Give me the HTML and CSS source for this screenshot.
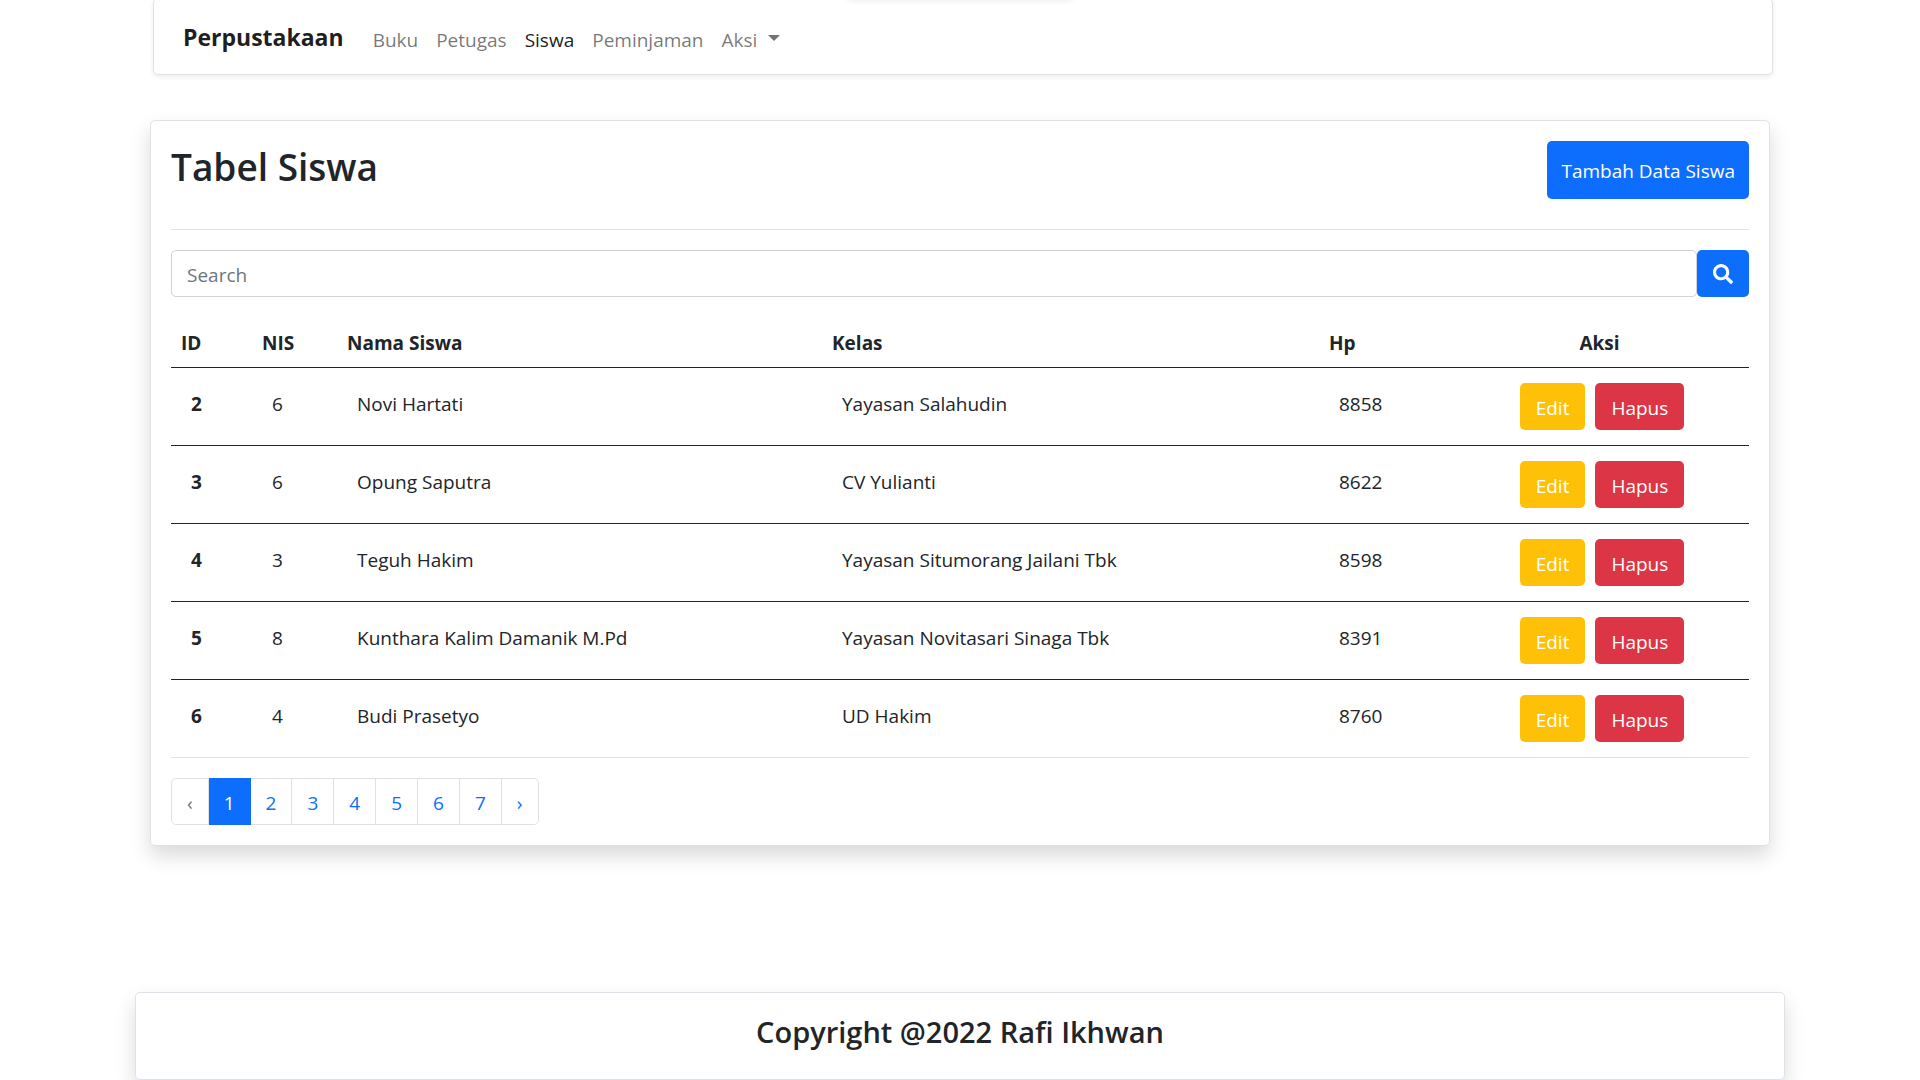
FILE: index.html
```html
<!DOCTYPE html>
<html lang="id">
<head>
<meta charset="utf-8">
<meta name="viewport" content="width=device-width, initial-scale=1">
<title>Perpustakaan</title>
<link rel="stylesheet" href="styles.css">
</head>
<body>
<header class="page-header">
  <nav class="navbar">
    <a class="brand" href="#">Perpustakaan</a>
    <ul class="nav-list">
      <li><a class="nav-link" href="#">Buku</a></li>
      <li><a class="nav-link" href="#">Petugas</a></li>
      <li><a class="nav-link active" href="#" aria-current="page">Siswa</a></li>
      <li><a class="nav-link" href="#">Peminjaman</a></li>
      <li><button class="nav-link dropdown-toggle" type="button">Aksi</button></li>
    </ul>
  </nav>
</header>

<main class="card">
  <div class="card-head">
    <h1 class="title">Tabel Siswa</h1>
    <button class="btn btn-primary btn-add" type="button">Tambah Data Siswa</button>
  </div>
  <form class="search">
    <input class="search-input" type="search" placeholder="Search" aria-label="Search">
    <button class="btn btn-primary btn-search" type="submit" aria-label="Cari">
      <svg class="search-icon" viewBox="0 0 512 512" aria-hidden="true"><path fill="currentColor" d="M505 442.700L405.300 343c-4.500-4.500-10.600-7-17-7H372c27.600-35.300 44-79.700 44-128C416 93.100 322.900 0 208 0S0 93.100 0 208s93.100 208 208 208c48.300 0 92.700-16.400 128-44v16.300c0 6.400 2.500 12.500 7 17l99.700 99.700c9.400 9.400 24.600 9.400 33.900 0l28.300-28.300c9.400-9.400 9.400-24.600.1-34zM208 336c-70.700 0-128-57.200-128-128 0-70.700 57.200-128 128-128 70.700 0 128 57.200 128 128 0 70.700-57.200 128-128 128z"/></svg>
    </button>
  </form>
  <table class="table">
    <colgroup>
      <col class="col-id"><col class="col-nis"><col><col class="col-kelas"><col class="col-hp"><col class="col-aksi">
    </colgroup>
    <thead>
      <tr><th scope="col">ID</th><th scope="col">NIS</th><th scope="col">Nama Siswa</th><th scope="col">Kelas</th><th scope="col">Hp</th><th scope="col" class="center">Aksi</th></tr>
    </thead>
    <tbody>
      <tr><th scope="row">2</th><td>6</td><td>Novi Hartati</td><td>Yayasan Salahudin</td><td>8858</td><td class="actions"><button class="btn btn-warning" type="button">Edit</button><button class="btn btn-danger" type="button">Hapus</button></td></tr>
      <tr><th scope="row">3</th><td>6</td><td>Opung Saputra</td><td>CV Yulianti</td><td>8622</td><td class="actions"><button class="btn btn-warning" type="button">Edit</button><button class="btn btn-danger" type="button">Hapus</button></td></tr>
      <tr><th scope="row">4</th><td>3</td><td>Teguh Hakim</td><td>Yayasan Situmorang Jailani Tbk</td><td>8598</td><td class="actions"><button class="btn btn-warning" type="button">Edit</button><button class="btn btn-danger" type="button">Hapus</button></td></tr>
      <tr><th scope="row">5</th><td>8</td><td>Kunthara Kalim Damanik M.Pd</td><td>Yayasan Novitasari Sinaga Tbk</td><td>8391</td><td class="actions"><button class="btn btn-warning" type="button">Edit</button><button class="btn btn-danger" type="button">Hapus</button></td></tr>
      <tr><th scope="row">6</th><td>4</td><td>Budi Prasetyo</td><td>UD Hakim</td><td>8760</td><td class="actions"><button class="btn btn-warning" type="button">Edit</button><button class="btn btn-danger" type="button">Hapus</button></td></tr>
    </tbody>
  </table>
  <nav aria-label="Halaman">
    <ul class="pagination">
      <li><span class="page disabled">‹</span></li>
      <li><span class="page current" aria-current="page">1</span></li>
      <li><a class="page" href="#">2</a></li>
      <li><a class="page" href="#">3</a></li>
      <li><a class="page" href="#">4</a></li>
      <li><a class="page" href="#">5</a></li>
      <li><a class="page" href="#">6</a></li>
      <li><a class="page" href="#">7</a></li>
      <li><a class="page" href="#" rel="next">›</a></li>
    </ul>
  </nav>
</main>

<footer class="footer">
  <h2 class="copyright">Copyright @2022 Rafi Ikhwan</h2>
</footer>
</body>
</html>
```
FILE: styles.css
```css
* { box-sizing: border-box; }

body {
  margin: 0;
  min-height: 100vh;
  display: flex;
  flex-direction: column;
  align-items: center;
  background: #fff;
  color: #212529;
  font: 400 19px/30px "Open Sans", "Noto Sans", sans-serif;
}

/* Header */
.page-header {
  position: relative;
  width: 100%;
  max-width: 1650px;
  padding: 0 12px 0 18px;
}
.page-header::before {
  content: "";
  position: absolute;
  top: -40px;
  left: 50%;
  width: 224px;
  height: 36px;
  margin-left: -112px;
  border-radius: 4px;
  box-shadow: 0 2px 8px rgba(0, 0, 0, .16);
}
.navbar {
  display: flex;
  align-items: center;
  gap: 20px;
  height: 77px;
  margin-top: -2px;
  padding: 0 29px;
  border: 1px solid #dee2e6;
  border-radius: 5px;
  box-shadow: 0 2px 5px rgba(0, 0, 0, .075);
}
.brand {
  color: rgba(0, 0, 0, .9);
  font-size: 23px;
  font-weight: 700;
  text-decoration: none;
}
.nav-list {
  display: flex;
  margin: 0;
  padding: 6px 0 0;
  list-style: none;
}
.nav-link {
  display: block;
  padding: 0 9px;
  border: 0;
  background: none;
  color: rgba(0, 0, 0, .55);
  font: inherit;
  text-decoration: none;
}
.nav-link.active { color: rgba(0, 0, 0, .9); }
.dropdown-toggle::after {
  content: "";
  display: inline-block;
  margin-left: 11px;
  vertical-align: 6px;
  border: 6px solid transparent;
  border-top-color: currentColor;
  border-bottom: 0;
}

/* Card */
.card {
  width: calc(100% - 30px);
  max-width: 1620px;
  margin-top: 45px;
  padding: 20px;
  border: 1px solid #dee2e6;
  border-radius: 5px;
  box-shadow: 0 10px 20px rgba(0, 0, 0, .15);
}
.card-head {
  display: flex;
  justify-content: space-between;
  padding-bottom: 30px;
  border-bottom: 1px solid #dee2e6;
}
.title {
  margin: 0;
  font-size: 37px;
  font-weight: 600;
  line-height: 52px;
}

.btn {
  height: 47px;
  padding: 2px 16px 0;
  border: 0;
  border-radius: 5px;
  color: #fff;
  font: inherit;
}
.btn-primary { background: #0d6efd; }
.btn-warning { background: #ffc107; }
.btn-danger { background: #dc3545; }
.btn-add { height: 58px; padding: 2px 14px 0; }

.search {
  display: flex;
  margin: 20px 0;
}
.search-input {
  flex: 1;
  height: 47px;
  padding: 2px 15px 0;
  border: 1px solid #ced4da;
  border-radius: 5px;
  background: #fff;
  color: #212529;
  font: inherit;
  appearance: none;
}
.search-input::placeholder { color: #6c757d; opacity: 1; }
.btn-search { width: 52px; padding: 0 16px; }
.search-icon { display: block; width: 20px; height: 20px; }

/* Table */
.table {
  width: 100%;
  border-collapse: collapse;
  table-layout: fixed;
}
.col-id { width: 81px; }
.col-nis { width: 85px; }
.col-kelas { width: 497px; }
.col-hp { width: 131px; }
.col-aksi { width: 299px; }
.table th, .table td {
  border-bottom: 1px solid #212529;
  text-align: left;
  vertical-align: top;
}
.table th { font-weight: 700; }
.table thead th { padding: 11px 10px 9px; }
.table tbody th, .table tbody td { padding: 21px 20px 19px; }
.table tbody tr:last-child > * { border-bottom-color: #dee2e6; }
.table thead .center { text-align: center; }
.table tbody .actions {
  padding: 15px 10px 15px 15px;
  text-align: center;
  font-size: 0;
}
.actions .btn { font-size: 19px; vertical-align: top; }
.actions .btn + .btn { margin-left: 10px; }

/* Pagination */
.pagination {
  display: flex;
  margin: 20px 0 0;
  padding: 0;
  list-style: none;
}
.page {
  display: block;
  padding: 9px 15px 6px;
  border: 1px solid #dee2e6;
  border-left: 0;
  color: #0d6efd;
  text-decoration: none;
}
.pagination li:first-child .page { border-left: 1px solid #dee2e6; border-radius: 5px 0 0 5px; }
.pagination li:last-child .page { border-radius: 0 5px 5px 0; }
.page.disabled { color: #6c757d; }
.page.current { border-color: #0d6efd; background: #0d6efd; color: #fff; }

/* Footer */
.footer {
  width: 100%;
  max-width: 1650px;
  margin-top: auto;
  padding: 20px;
  border: 1px solid #dee2e6;
  border-radius: 5px;
  box-shadow: 0 10px 20px rgba(0, 0, 0, .15);
  text-align: center;
}
.copyright {
  margin: 0 0 8px;
  font-size: 29px;
  font-weight: 600;
  line-height: 38px;
}
```
